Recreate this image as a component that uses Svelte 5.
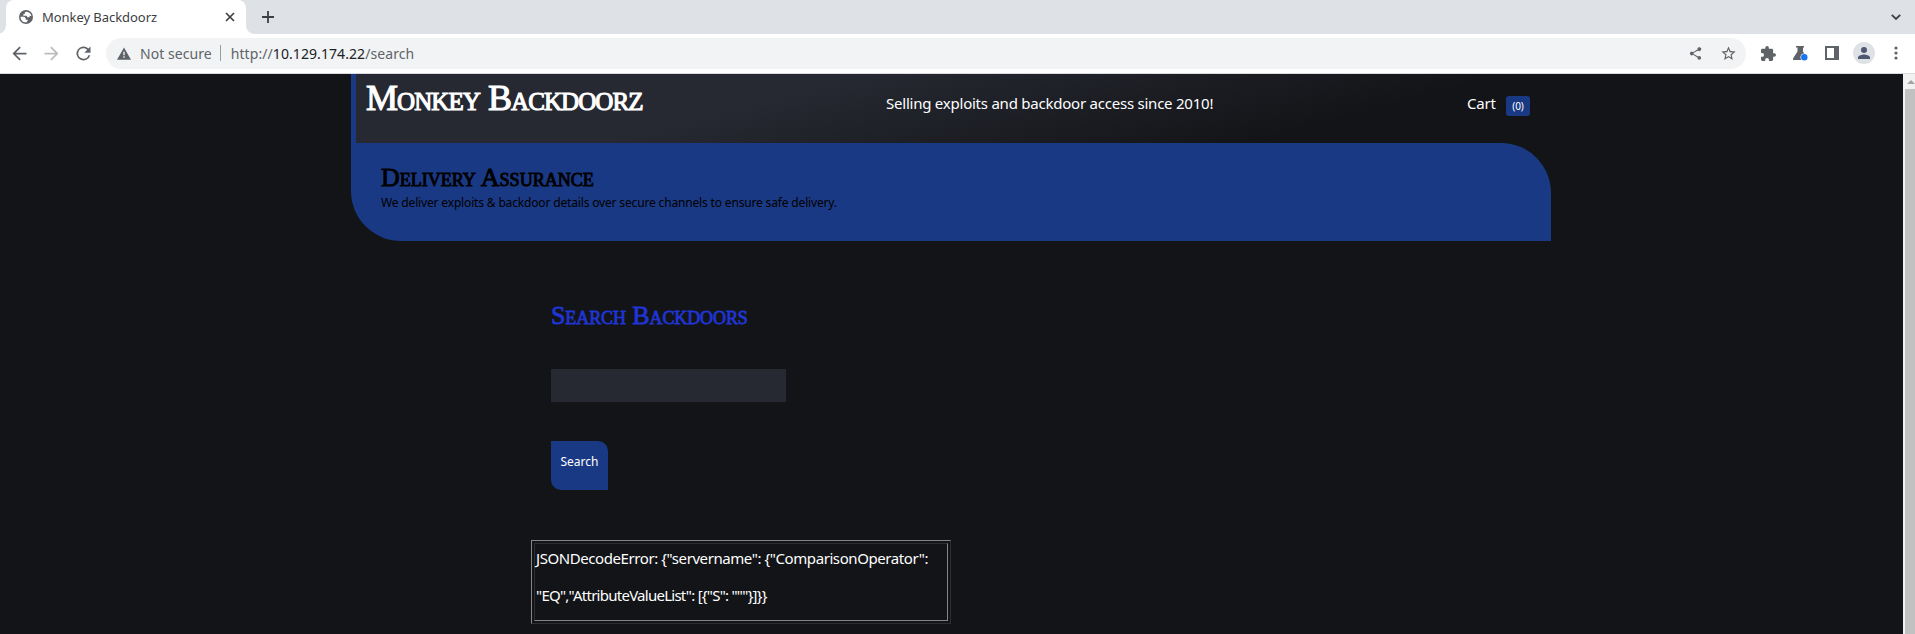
<script>
  const message = 'JSONDecodeError: {"servername": {"ComparisonOperator":';
  const detail = '"EQ","AttributeValueList": [{"S": """}]}}';
</script>

<div class="window">
  <div class="tabs">
    <div class="tab">
      <svg class="globe" viewBox="0 0 24 24"><circle cx="12" cy="12" r="12" fill="#5f6368"/><path fill="#fff" d="M13.500 2.800 10 4v3H7.500v3H13l1.500 2.500h3.500V10l3.300.5C21 6 17 3 13.500 2.800zM2.700 11.500H9l2.500 2.500v2.500H15V18l-2.500 3.300C6 21.500 2.500 16.500 2.700 11.500z"/></svg>
      <span class="title">Monkey Backdoorz</span>
      <svg class="close" viewBox="0 0 10 10"><path d="M1 1l8 8M9 1L1 9" stroke="#3c4043" stroke-width="1.7"/></svg>
    </div>
    <svg class="plus" viewBox="0 0 12 12"><path d="M6 0v12M0 6h12" stroke="#3c4043" stroke-width="1.8"/></svg>
    <svg class="chev" viewBox="0 0 10 6"><path d="M.8.8L5 5 9.200.8" fill="none" stroke="#3c4043" stroke-width="1.8"/></svg>
  </div>
  <div class="toolbar">
    <svg class="nav" viewBox="0 0 24 24"><path fill="#5f6368" d="M20 11H7.830l5.590-5.590L12 4l-8 8 8 8 1.410-1.410L7.830 13H20z"/></svg>
    <svg class="nav" viewBox="0 0 24 24"><path fill="#babcbe" d="M12 4l-1.410 1.410L16.170 11H4v2h12.170l-5.580 5.590L12 20l8-8z"/></svg>
    <svg class="nav" viewBox="0 0 24 24"><path fill="#5f6368" d="M17.650 6.350A8 8 0 1 0 19.730 14h-2.080A6 6 0 1 1 12 6c1.660 0 3.140.69 4.220 1.780L13 11h7V4z"/></svg>
    <div class="omnibox">
      <svg class="warn" viewBox="0 0 16 14"><path fill="#5f6368" fill-rule="evenodd" d="M8 0l8 14H0zM7.200 5v4h1.600V5zm0 5.200v1.700h1.600v-1.700z"/></svg>
      <span class="secure">Not secure</span><i class="sep"></i>
      <span class="url">http://<b>10.129.174.22</b>/search</span>
      <svg class="share" viewBox="0 0 24 24"><path fill="#5f6368" d="M18 16.080c-.76 0-1.440.3-1.960.77L8.910 12.700a3.300 3.300 0 0 0 0-1.400l7.050-4.110A3 3 0 1 0 15 5c0 .24.040.47.090.7L8.040 9.810a3 3 0 1 0 0 4.380l7.120 4.160c-.05.21-.08.43-.08.65a2.920 2.920 0 1 0 2.920-2.920z"/></svg>
      <svg class="star" viewBox="0 0 24 24"><path fill="#5f6368" d="M22 9.240l-7.190-.62L12 2 9.190 8.630 2 9.240l5.460 4.730L5.820 21 12 17.270 18.180 21l-1.630-7.030zM12 15.400l-3.760 2.270 1-4.280-3.320-2.880 4.380-.38L12 6.100l1.710 4.040 4.380.38-3.320 2.880 1 4.280z"/></svg>
    </div>
    <svg class="ext" viewBox="2 1 21 21"><path fill="#5f6368" d="M20.500 11H19V7a2 2 0 0 0-2-2h-4V3.500a2.500 2.500 0 0 0-5 0V5H4a2 2 0 0 0-2 2v3.800h1.500a2.700 2.700 0 0 1 0 5.400H2V20a2 2 0 0 0 2 2h3.800v-1.500a2.700 2.700 0 0 1 5.400 0V22H17a2 2 0 0 0 2-2v-4h1.500a2.500 2.500 0 0 0 0-5z"/></svg>
    <svg class="flask" viewBox="0 0 15 15"><path fill="#5f6368" d="M3 0h8v1.500h-1v4l4 6.500q1 2-1 2H1q-1.500 0-.7-2L4.500 5.500v-4H3z"/><circle cx="11.300" cy="11.200" r="3.800" fill="#fff"/><circle cx="11.300" cy="11.200" r="3.200" fill="#1a73f0"/></svg>
    <svg class="panel" viewBox="0 0 14 14"><path fill="#5f6368" fill-rule="evenodd" d="M0 0h14v14H0zM2 2v10h7V2z"/></svg>
    <div class="avatar"><svg viewBox="0 0 12 12"><circle cx="6" cy="3" r="3" fill="#4c5770"/><path fill="#4c5770" d="M0 12v-1.500C0 8.500 4 7.500 6 7.500s6 1 6 3V12z"/></svg></div>
    <svg class="dots" viewBox="0 0 4 14"><g fill="#5f6368"><circle cx="2" cy="2" r="1.600"/><circle cx="2" cy="7" r="1.600"/><circle cx="2" cy="12" r="1.600"/></g></svg>
  </div>
  <div class="view">
    <div class="page">
      <div class="site">
        <header>
          <h1>Monkey Backdoorz</h1>
          <p class="tag">Selling exploits and backdoor access since 2010!</p>
          <span class="cart">Cart</span><span class="count">(0)</span>
        </header>
        <section class="banner">
          <h2>Delivery Assurance</h2>
          <p>We deliver exploits &amp; backdoor details over secure channels to ensure safe delivery.</p>
        </section>
      </div>
      <main>
        <h2>Search Backdoors</h2>
        <input aria-label="Search" />
        <button>Search</button>
        <div class="error"><div class="cell"><span class="l1">{message}</span><span class="l2">{detail}</span></div></div>
      </main>
    </div>
    <div class="scroll"><svg viewBox="0 0 8 4"><path d="M0 4L4 0l4 4z" fill="#a3a3a3"/></svg><div class="thumb"></div></div>
  </div>
</div>

<style>
  :global(body) { margin: 0; overflow: hidden; }
  * { box-sizing: border-box; }
  svg { display: block; flex: none; }
  h1, h2, p { margin: 0; font-weight: 400; }
  span, p, h1, h2 { white-space: nowrap; }
  .window { width: 1915px; height: 634px; display: flex; flex-direction: column; font-family: "Noto Sans", sans-serif; overflow: hidden; }
  .tabs { height: 34px; flex: none; background: #dee1e6; display: flex; align-items: center; }
  .tab { position: relative; width: 240px; height: 34px; margin-left: 6px; background: #fff; border-radius: 8px 8px 0 0; display: flex; align-items: center; padding: 0 11px 0 13px; }
  .tab::before, .tab::after { content: ""; position: absolute; bottom: 0; width: 8px; height: 8px; }
  .tab::before { left: -8px; background: radial-gradient(circle at 0 0, transparent 7.5px, #fff 8px); }
  .tab::after { right: -8px; background: radial-gradient(circle at 100% 0, transparent 7.5px, #fff 8px); }
  .globe { width: 14px; height: 14px; }
  .title { margin-left: 9px; font-size: 13px; letter-spacing: -0.05px; color: #3c4043; flex: 1; }
  .close { width: 10px; height: 10px; }
  .plus { width: 12px; height: 12px; margin-left: 16px; }
  .chev { width: 10px; height: 6px; margin-left: auto; margin-right: 14px; }
  .toolbar { height: 40px; flex: none; background: #fff; border-bottom: 1px solid #d9dbde; display: flex; align-items: center; padding: 0 0 1px 9px; }
  .nav { width: 21px; height: 21px; margin-right: 11px; }
  .omnibox { width: 1640px; height: 31px; margin-left: 1px; border-radius: 16px; background: #f1f3f4; display: flex; align-items: center; padding: 0 9px 0 11px; font-size: 14px; color: #5f6368; }
  .warn { width: 14px; height: 13px; margin-right: 9px; }
  .secure { letter-spacing: 0.05px; }
  .url { letter-spacing: 0.08px; }
  .sep { width: 1px; height: 16px; background: #9a9da1; margin: 0 10px 0 8px; }
  b { font-weight: 400; color: #202124; }
  .share { width: 15px; height: 15px; margin-left: auto; margin-right: 17px; }
  .star { width: 17px; height: 17px; }
  .ext { width: 15px; height: 15px; margin-left: 15px; }
  .flask { width: 15px; height: 15px; margin-left: 17px; }
  .panel { width: 14px; height: 14px; margin-left: 17px; }
  .avatar { width: 22px; height: 22px; margin-left: 14px; border-radius: 50%; background: #dee1e6; display: flex; align-items: center; justify-content: center; }
  .avatar svg { width: 12px; height: 12px; }
  .dots { width: 4px; height: 14px; margin-left: 19px; }
  .view { flex: 1; display: flex; min-height: 0; }
  .page { width: 1903px; background: #131417; color: #fff; overflow: hidden; }
  .site { width: 1200px; margin-left: 351px; }
  header { height: 69px; border-left: 5px solid #1a3984; background: linear-gradient(165deg, #262932 34%, #131417 80%); display: flex; align-items: flex-start; padding-left: 10px; }
  h1, h2 { font-family: "Liberation Serif", serif; font-variant: small-caps; }
  h1 { width: 520px; font-size: 36px; line-height: 40px; padding-top: 4px; letter-spacing: -0.93px; -webkit-text-stroke: 1.1px #fff; }
  .tag { width: 581px; font-size: 15px; letter-spacing: -0.23px; line-height: 24px; padding-top: 17px; }
  .cart { width: 39px; font-size: 15px; letter-spacing: -0.2px; line-height: 24px; padding-top: 17px; }
  .count { width: 24px; height: 20px; margin-top: 22px; border-radius: 3px; background: #1a3984; font-size: 10px; line-height: 21px; text-align: center; }
  .banner { height: 98px; background: #1a3984; border-radius: 0 50px 0 50px; color: #000; padding: 19px 0 0 30px; }
  .banner h2 { font-size: 26px; line-height: 31px; -webkit-text-stroke: 0.9px #000; }
  .banner p { font-size: 12px; line-height: 20px; letter-spacing: -0.16px; }
  main { padding: 60px 0 0 551px; display: flex; flex-direction: column; align-items: flex-start; }
  main h2 { font-size: 26px; line-height: 30px; letter-spacing: -0.1px; color: #1f35d4; -webkit-text-stroke: 0.8px #1f35d4; }
  input { width: 235px; height: 33px; margin-top: 38px; border: 0; padding: 0 8px; background: #262932; color: #fff; }
  button { width: 57px; height: 49px; margin-top: 39px; padding: 0 0 8px; border: 0; border-radius: 0 10px 0 10px; background: #1a3984; color: #fff; font: 12px "Noto Sans", sans-serif; }
  .error { width: 420px; height: 84px; margin: 50px 0 0 -20px; border: 1px solid; border-color: #858585 #2e2e30 #2e2e30 #858585; padding: 2px; }
  .cell { height: 78px; border: 1px solid; border-color: #2e2e30 #858585 #858585 #2e2e30; padding-left: 1px; font-size: 15px; line-height: 37px; display: flex; flex-direction: column; align-items: flex-start; }
  .l1 { letter-spacing: -0.42px; margin-top: -4px; }
  .l2 { letter-spacing: -0.74px; }
  .scroll { width: 12px; background: #f1f1f1; display: flex; flex-direction: column; align-items: center; }
  .scroll svg { width: 8px; height: 4px; margin: 6px 0 0 3px; }
  .thumb { width: 10px; flex: 1; margin: 5px 0 0 2px; background: #c1c1c1; }
</style>
